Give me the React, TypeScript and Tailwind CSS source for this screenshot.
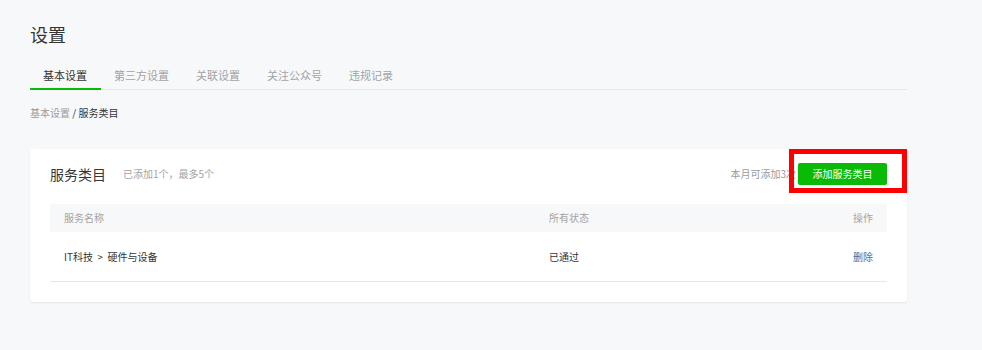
import React from "react";

const font = { fontFamily: '"Noto Sans CJK SC", "Noto Sans", "Liberation Sans", sans-serif' };

export default function App() {
  const tabs = ["基本设置", "第三方设置", "关联设置", "关注公众号", "违规记录"];
  return (
    <div style={font} className="min-h-[350px] w-full bg-[#f7f8fa] px-[30px] pt-[22px]">
      <h1 className="text-[18px] leading-[24px] font-normal text-[#353535]">设置</h1>
      <div className="mt-[14px] flex w-[877px] border-b border-[#e7e7eb]">
        {tabs.map((t, i) => (
          <div
            key={t}
            className={
              "relative flex h-[29px] items-center pl-[13px] pr-[14px] text-[11px] leading-[12px] " +
              (i === 0 ? "text-[#353535]" : "text-[#a3a3a3]")
            }
          >
            {t}
            {i === 0 && <span className="absolute bottom-[-1px] left-0 right-0 h-[2px] bg-[#09bb07]" />}
          </div>
        ))}
      </div>
      <div className="mt-[16px] text-[10px] leading-[14px]">
        <span className="text-[#9a9a9a]">基本设置</span>
        <span className="text-[#353535]"> / 服务类目</span>
      </div>
      <div className="relative mt-[29px] w-[877px] rounded-[3px] bg-white px-[20px] pb-[20px] pt-[14px] shadow-[0_1px_2px_rgba(0,0,0,0.08)]">
        <div className="flex h-[22px] items-center">
          <span className="text-[14px] leading-[20px] text-[#353535]">服务类目</span>
          <span className="ml-[17px] text-[10px] leading-[14px] text-[#a3a3a3]">已添加1个，最多5个</span>
          <span className="ml-auto mr-[2px] text-[10px] leading-[14px] text-[#9a9a9a]">本月可添加3次</span>
          <button className="h-[22px] w-[89px] rounded-[2px] bg-[#09bb07] text-[10px] leading-[14px] text-white">
            添加服务类目
          </button>
        </div>
        <div className="mt-[19px] grid h-[28px] grid-cols-[485px_1fr_auto] items-center bg-[#f7f8fa] px-[14px] text-[10px] leading-[14px] text-[#a3a3a3]">
          <span>服务名称</span>
          <span>所有状态</span>
          <span>操作</span>
        </div>
        <div className="grid h-[50px] grid-cols-[485px_1fr_auto] items-center border-b border-[#e7e7eb] px-[14px] text-[10px] leading-[14px] text-[#353535]">
          <span className="whitespace-pre">IT科技  &gt;  硬件与设备</span>
          <span>已通过</span>
          <span className="text-[#576b95]">删除</span>
        </div>
        <div className="pointer-events-none absolute right-0 top-0 h-[44px] w-[118px] border-[5px] border-[#ff0000]" />
      </div>
    </div>
  );
}
